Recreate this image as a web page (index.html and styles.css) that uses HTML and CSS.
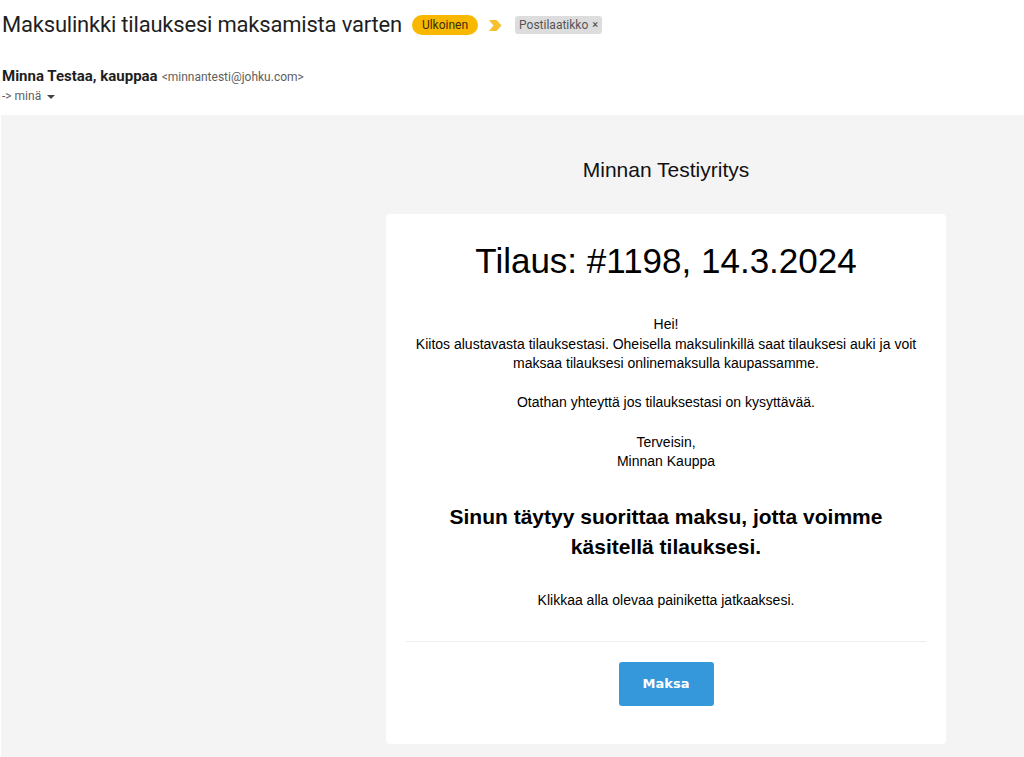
FILE: index.html
```html
<!DOCTYPE html>
<html lang="fi">
<head>
<meta charset="utf-8">
<title>Maksulinkki tilauksesi maksamista varten</title>
<link rel="stylesheet" href="styles.css">
</head>
<body>
<header class="mail-head">
  <div class="subject-row">
    <h1 class="subject">Maksulinkki tilauksesi maksamista varten</h1>
    <span class="chip chip-ext">Ulkoinen</span>
    <svg class="imp" width="13" height="11" viewBox="0 0 13 11"><path d="M0 0h7.5l5 5.5-5 5.5H0l4.5-5.5z" fill="#f6c02e"/></svg>
    <span class="chip chip-box">Postilaatikko <span class="x">×</span></span>
  </div>
  <div class="sender-row">
    <span class="sender">Minna Testaa, kauppaa</span>
    <span class="addr">&lt;minnantesti@johku.com&gt;</span>
  </div>
  <div class="to-row">-&gt; minä <svg class="caret" width="8" height="4" viewBox="0 0 8 4"><path d="M0 0h8L4 4z" fill="#444"/></svg></div>
</header>
<main class="mail-body">
  <div class="email">
    <div class="brand">Minnan Testiyritys</div>
    <div class="card">
      <h2 class="order">Tilaus: #1198, 14.3.2024</h2>
      <p class="msg">Hei!<br>Kiitos alustavasta tilauksestasi. Oheisella maksulinkillä saat tilauksesi auki ja voit maksaa tilauksesi onlinemaksulla kaupassamme.<br><br>Otathan yhteyttä jos tilauksestasi on kysyttävää.<br><br>Terveisin,<br>Minnan Kauppa</p>
      <h3 class="notice">Sinun täytyy suorittaa maksu, jotta voimme käsitellä tilauksesi.</h3>
      <p class="msg click">Klikkaa alla olevaa painiketta jatkaaksesi.</p>
      <hr class="rule">
      <div class="btn-row"><a class="pay" href="#">Maksa</a></div>
    </div>
  </div>
</main>
</body>
</html>
```
FILE: styles.css
```css
html, body {
  margin: 0;
  padding: 0;
  background: #fff;
}
body {
  font-family: Roboto, "Noto Sans", Arial, sans-serif;
  color: #1f1f1f;
}
.mail-head {
  padding: 0 0 0 2px;
  height: 115px;
  box-sizing: border-box;
}
.subject-row {
  display: flex;
  align-items: center;
  height: 50px;
}
.subject {
  margin: 0 10px 0 0;
  font-size: 22px;
  font-weight: 400;
  color: #1f1f1f;
  line-height: 28px;
  letter-spacing: -0.2px;
}
.chip {
  display: inline-flex;
  align-items: center;
  font-size: 12px;
  line-height: 16px;
}
.chip-ext {
  background: #f9b800;
  color: #3b2c00;
  border-radius: 10px;
  height: 20px;
  padding: 0 10px;
  box-sizing: border-box;
}
.imp {
  margin: 0 13px 0 11px;
}
.chip-box {
  background: #dddddd;
  color: #555;
  border-radius: 3px;
  height: 18px;
  padding: 0 4px;
  font-size: 12px;
}
.chip-box .x {
  font-size: 11px;
  margin-left: 4px;
  color: #444;
}
.sender-row {
  margin-top: 17px;
  display: flex;
  align-items: baseline;
  height: 20px;
}
.sender {
  font-weight: 700;
  font-size: 15px;
  color: #1f1f1f;
  margin-right: 4px;
}
.addr {
  font-size: 12px;
  color: #5e5e5e;
}
.to-row {
  font-size: 12px;
  color: #5e5e5e;
  display: flex;
  align-items: center;
  height: 18px;
}
.caret {
  margin-left: 6px;
  margin-top: 1px;
}
.mail-body {
  background: #f4f4f4;
  margin-left: 1px;
  padding: 42px 0 13px 385px;
  font-family: Arial, "Liberation Sans", sans-serif;
  color: #000;
}
.email {
  width: 560px;
}
.brand {
  text-align: center;
  font-size: 21px;
  line-height: 26px;
  color: #111;
  height: 57px;
}
.card {
  background: #fff;
  border-radius: 4px;
  padding: 26px 20px 38px;
  text-align: center;
}
.order {
  margin: 0;
  font-size: 35px;
  font-weight: 400;
  line-height: 42px;
}
.msg {
  margin: 33px 0 0;
  font-size: 14px;
  line-height: 19.6px;
}
.notice {
  margin: 30px 30px 0;
  font-size: 21px;
  font-weight: 700;
  line-height: 30px;
}
.msg.click {
  margin-top: 29px;
}
.rule {
  margin: 31px 0 0;
  border: 0;
  border-top: 1px solid #eeeeee;
  height: 0;
}
.btn-row {
  margin-top: 20px;
  display: flex;
  justify-content: center;
}
.pay {
  display: block;
  width: 95px;
  height: 44px;
  line-height: 44px;
  background: #3498db;
  color: #fff;
  font-weight: 700;
  text-decoration: none;
  border-radius: 3px;
  font-family: "DejaVu Sans", Verdana, sans-serif;
  font-size: 13px;
}
```
